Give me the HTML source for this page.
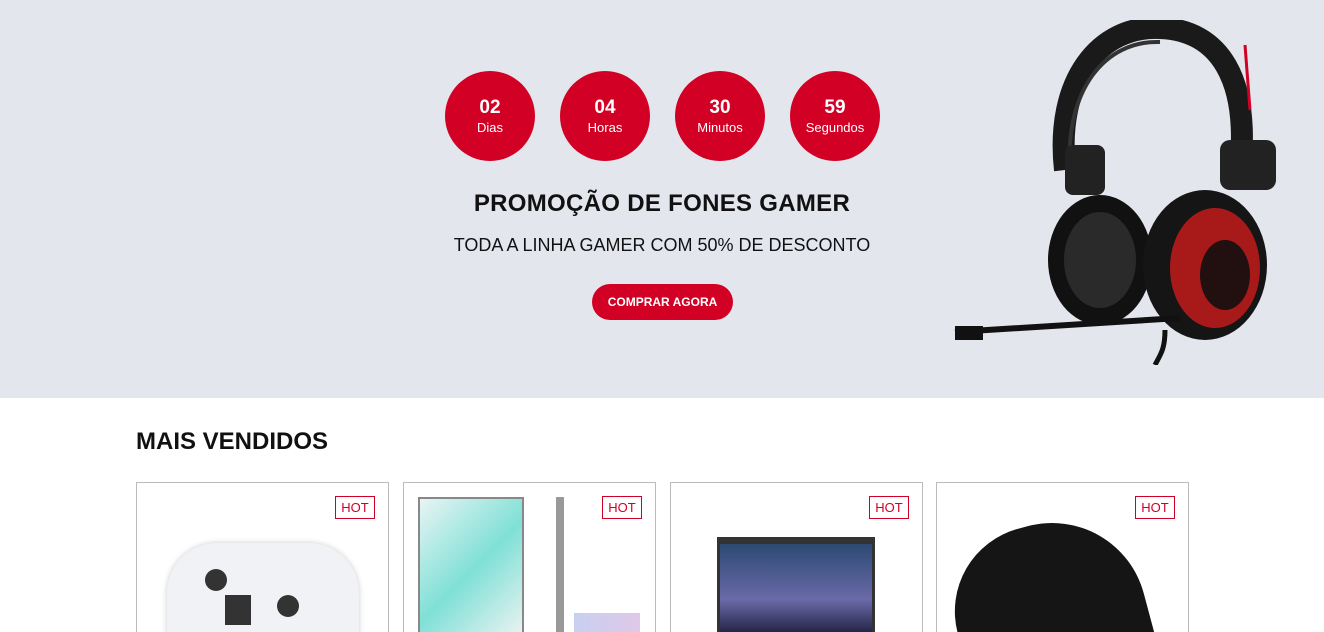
<!DOCTYPE html>
<html><head><meta charset="utf-8"><style>
*{margin:0;padding:0;box-sizing:border-box}
html,body{width:1324px;height:632px;overflow:hidden}
body{background:#fff;font-family:"Liberation Sans",sans-serif;position:relative}
.banner{position:absolute;left:0;top:0;width:1324px;height:398px;background:#e4e6ee}
.c{position:absolute;top:71px;width:90px;height:90px;border-radius:50%;background:#d10024;color:#fff;text-align:center}
.c b{display:block;font-size:19px;margin-top:26px;line-height:22px}
.c span{display:block;font-size:13px;line-height:18px}
h1{position:absolute;left:0;width:1324px;top:190px;text-align:center;font-size:24px;font-weight:bold;color:#111;letter-spacing:.3px}
h2{position:absolute;left:0;width:1324px;top:235px;text-align:center;font-size:18px;font-weight:normal;color:#111}
.btn{position:absolute;left:592px;top:284px;width:141px;height:36px;border-radius:18px;background:#d10024;color:#fff;font-size:12px;font-weight:bold;text-align:center;line-height:36px}
.sec{position:absolute;left:136px;top:428px;font-size:24px;font-weight:bold;color:#111}
.card{position:absolute;top:482px;width:253px;height:150px;border:1px solid #bbb;border-bottom:none;overflow:hidden}
.hot{position:absolute;right:13px;top:13px;width:40px;height:23px;border:1px solid #d10024;color:#d10024;font-size:13px;text-align:center;line-height:21px}
</style></head><body>
<div class="banner"></div>
<div class="c" style="left:445px"><b>02</b><span>Dias</span></div>
<div class="c" style="left:560px"><b>04</b><span>Horas</span></div>
<div class="c" style="left:675px"><b>30</b><span>Minutos</span></div>
<div class="c" style="left:790px"><b>59</b><span>Segundos</span></div>
<h1>PROMOÇÃO DE FONES GAMER</h1>
<h2>TODA A LINHA GAMER COM 50% DE DESCONTO</h2>
<div class="btn">COMPRAR AGORA</div>
<svg style="position:absolute;left:950px;top:20px" width="340" height="345" viewBox="0 0 340 345">
<path d="M115 150 C105 60 150 5 210 8 C270 10 300 60 290 150" fill="none" stroke="#1a1a1a" stroke-width="22"/>
<path d="M120 150 C115 70 155 20 210 22" fill="none" stroke="#333" stroke-width="4"/>
<path d="M295 25 L300 90" stroke="#d10024" stroke-width="3"/>
<rect x="270" y="120" width="56" height="50" rx="10" fill="#222"/>
<rect x="115" y="125" width="40" height="50" rx="8" fill="#222"/>
<ellipse cx="150" cy="240" rx="52" ry="65" fill="#111"/>
<ellipse cx="150" cy="240" rx="36" ry="48" fill="#2a2a2a"/>
<ellipse cx="255" cy="245" rx="62" ry="75" fill="#151515"/>
<ellipse cx="265" cy="248" rx="45" ry="60" fill="#a81a1a"/>
<ellipse cx="275" cy="255" rx="25" ry="35" fill="#221010"/>
<path d="M5 312 L230 298" stroke="#111" stroke-width="6"/>
<rect x="5" y="306" width="28" height="14" fill="#111"/>
<path d="M215 310 C215 330 210 335 205 345" stroke="#111" stroke-width="5" fill="none"/>
</svg>
<div class="sec">MAIS VENDIDOS</div>
<div class="card" style="left:136px"><div class="hot">HOT</div>
<div style="position:absolute;left:30px;top:60px;width:192px;height:120px;border-radius:50px 50px 20px 20px;background:#f1f2f6;box-shadow:0 0 6px #ccc"></div>
<div style="position:absolute;left:68px;top:86px;width:22px;height:22px;border-radius:50%;background:#333"></div>
<div style="position:absolute;left:140px;top:112px;width:22px;height:22px;border-radius:50%;background:#333"></div>
<div style="position:absolute;left:88px;top:112px;width:26px;height:30px;background:#333"></div></div>
<div class="card" style="left:403px"><div class="hot">HOT</div>
<div style="position:absolute;left:14px;top:14px;width:106px;height:150px;background:linear-gradient(135deg,#e8f4f4,#7fe0d6 50%,#f4f4f4);border:2px solid #888"></div>
<div style="position:absolute;left:152px;top:14px;width:8px;height:150px;background:#999"></div>
<div style="position:absolute;left:170px;top:130px;width:66px;height:30px;background:linear-gradient(90deg,#c8d0f0,#e0c8e8)"></div></div>
<div class="card" style="left:670px"><div class="hot">HOT</div>
<div style="position:absolute;left:46px;top:54px;width:158px;height:100px;background:#333;padding:7px 3px 0"><div style="width:100%;height:100%;background:linear-gradient(180deg,#2c4a72,#6a6aa8 60%,#1a1a3a)"></div></div></div>
<div class="card" style="left:936px"><div class="hot">HOT</div>
<div style="position:absolute;left:20px;top:40px;width:190px;height:190px;border-radius:45% 50% 20% 40%;background:#151515;transform:rotate(-15deg)"></div></div>
</body></html>
